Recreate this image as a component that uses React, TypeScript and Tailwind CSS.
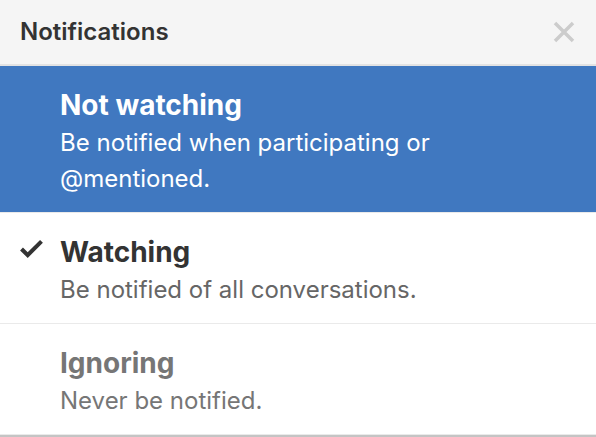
import React from 'react';

const options = [
  {
    id: 'not-watching',
    title: 'Not watching',
    description: 'Be notified when participating or @mentioned.',
    selected: false,
    active: true,
  },
  {
    id: 'watching',
    title: 'Watching',
    description: 'Be notified of all conversations.',
    selected: true,
    active: false,
  },
  {
    id: 'ignoring',
    title: 'Ignoring',
    description: 'Never be notified.',
    selected: false,
    active: false,
  },
];

const CheckIcon = () => (
  <svg width="23" height="19" viewBox="0 3 12 10" className="fill-current">
    <path d="M12 5l-8 8-4-4 1.5-1.5L4 10l6.5-6.5L12 5z" />
  </svg>
);

const App: React.FC = () => {
  return (
    <div className="w-[596px] h-[437px] bg-white overflow-hidden font-['Inter','Liberation_Sans',sans-serif]">
      {/* Header */}
      <div className="h-[66px] flex items-center justify-between pl-[20px] pr-[21px] bg-[#f5f5f5] border-b-2 border-[#e3e3e3]">
        <h2 className="text-[24px] font-semibold text-[#333]">Notifications</h2>
        <svg width="22" height="22" viewBox="0 0 22 22" className="text-[#cccccc]">
          <path d="M2 2L20 20M20 2L2 20" stroke="currentColor" strokeWidth="3.5" strokeLinecap="butt" />
        </svg>
      </div>

      {/* Options */}
      {options.map((opt) => (
        <div
          key={opt.id}
          className={`flex pt-[19px] pb-[15px] border-b border-[#eaeaea] ${
            opt.active ? 'bg-[#4078c0] text-white' : ''
          }`}
        >
          <div className="w-[60px] flex justify-start pl-[20px] pt-[7px] text-[#333]">
            {opt.selected && <CheckIcon />}
          </div>
          <div className="flex-1 pr-4">
            <div
              className={`text-[28px] leading-[40px] font-bold ${
                opt.active ? 'text-white' : opt.id === 'ignoring' ? 'text-[#767676]' : 'text-[#333]'
              }`}
            >
              {opt.title}
            </div>
            <div
              className={`text-[24px] leading-[36px] max-w-[420px] ${
                opt.active ? 'text-white' : opt.id === 'ignoring' ? 'text-[#767676]' : 'text-[#666]'
              }`}
            >
              {opt.description}
            </div>
          </div>
        </div>
      ))}
      <div className="h-[2px] bg-[#c4c4c4]" />
    </div>
  );
};

export default App;
